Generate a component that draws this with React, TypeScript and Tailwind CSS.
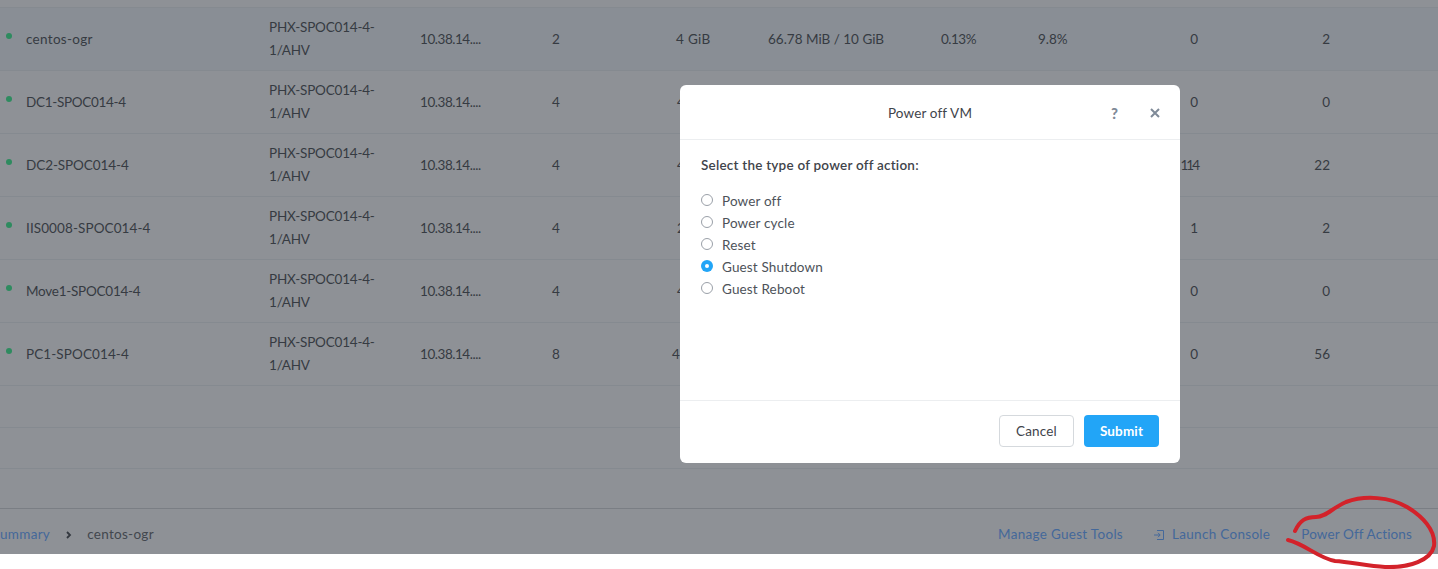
const rows = [
  { name: "centos-ogr", nameClass: "tracking-[0.3px]", cpu: "2", mem: "4 GiB", memClass: "pl-[64px] tracking-[0.3px]", usage: "66.78 MiB / 10 GiB", a: "0.13%", b: "9.8%", c: "0", cClass: "", d: "2", first: true },
  { name: "DC1-SPOC014-4", nameClass: "tracking-[-0.3px]", cpu: "4", mem: "4", memClass: "pl-[65px]", usage: "", a: "", b: "", c: "0", cClass: "", d: "0" },
  { name: "DC2-SPOC014-4", nameClass: "tracking-[-0.08px]", cpu: "4", mem: "4", memClass: "pl-[65px]", usage: "", a: "", b: "", c: "114", cClass: "tracking-[-2px]", d: "22" },
  { name: "IIS0008-SPOC014-4", nameClass: "tracking-[0.1px]", cpu: "4", mem: "2", memClass: "pl-[65px]", usage: "", a: "", b: "", c: "1", cClass: "", d: "2" },
  { name: "Move1-SPOC014-4", nameClass: "tracking-[-0.25px]", cpu: "4", mem: "4", memClass: "pl-[65px]", usage: "", a: "", b: "", c: "0", cClass: "", d: "0" },
  { name: "PC1-SPOC014-4", nameClass: "tracking-[0.1px]", cpu: "8", mem: "4", memClass: "pl-[60px]", usage: "", a: "", b: "", c: "0", cClass: "", d: "56" },
];

const options = ["Power off", "Power cycle", "Reset", "Guest Shutdown", "Guest Reboot"];

export default function App() {
  return (
    <div className="relative w-[1438px] h-[569px] overflow-hidden bg-white font-['Lato','Open_Sans',sans-serif]">
      <div className="flex flex-col h-[554px] bg-[#8e9196] text-[13.5px] text-[#363b42]">
        <div className="h-[8px] shrink-0 border-b border-[#858a90]" />
        {rows.map((r) => (
          <div
            key={r.name}
            className={`grid grid-cols-[26px_243px_151px_80px_112px_156px_173px_97px_82px_144px_116px] items-center h-[63px] shrink-0 border-b border-[#858a90] ${r.first ? "bg-[#898e95]" : ""}`}
          >
            <div className="pl-[6px] -mt-[6px]">
              <div className="w-[6px] h-[6px] rounded-full bg-[#2e8b5f]" />
            </div>
            <div className={r.nameClass}>{r.name}</div>
            <div className="leading-[23px] tracking-[-0.2px]">
              PHX-SPOC014-4-
              <br />
              1/AHV
            </div>
            <div className="tracking-[-0.45px]">10.38.14....</div>
            <div className="text-center">{r.cpu}</div>
            <div className={r.memClass}>{r.mem}</div>
            <div>{r.usage}</div>
            <div className="tracking-[-0.5px]">{r.a}</div>
            <div>{r.b}</div>
            <div className={`text-right pr-[66px] ${r.cClass}`}>{r.c}</div>
            <div className="text-right pr-[50px]">{r.d}</div>
          </div>
        ))}
        <div className="h-[42px] shrink-0 border-b border-[#858a90]" />
        <div className="h-[41px] shrink-0 border-b border-[#858a90]" />
        <div className="h-[40px] shrink-0 border-b border-[#7a7e84]" />
        <div className="flex-1 flex items-center justify-between pr-[26px] pt-[6px] text-[#44689a] tracking-[0.3px]">
          <div className="flex items-center">
            <span>ummary</span>
            <svg viewBox="0 0 8 8" className="w-[8px] h-[8px] ml-[15px] mr-[14px] text-[#33383f]" fill="none" stroke="currentColor" strokeWidth="1.8">
              <path d="M2 1l3 3-3 3" />
            </svg>
            <span className="text-[#42474e]">centos-ogr</span>
          </div>
          <div className="flex items-center">
            <span>Manage Guest Tools</span>
            <svg viewBox="0 0 12 12" className="w-[12px] h-[12px] ml-[30px] mr-[7px]" fill="none" stroke="currentColor" strokeWidth="1">
              <path d="M4 1.5h6.5v9H4M1 6h6M5 3.8 7.2 6 5 8.2" />
            </svg>
            <span>Launch Console</span>
            <span className="ml-[31px] tracking-[0.13px]">Power Off Actions</span>
          </div>
        </div>
      </div>

      <div className="absolute left-[680px] top-[85px] w-[500px] h-[378px] flex flex-col bg-white rounded-[6px] text-[13.5px] text-[#4d5259] tracking-[0.15px]">
        <div className="relative h-[55px] shrink-0 flex items-center justify-center pt-[2px] border-b border-[#eceef0] text-[#3f444b]">
          <span>Power off VM</span>
          <span className="absolute left-[431px] font-black text-[15px] text-[#7f8a98]">?</span>
          <svg viewBox="0 0 10 10" className="absolute left-[470px] w-[10px] h-[10px] text-[#7f8a98]" fill="none" stroke="currentColor" strokeWidth="2">
            <path d="M1 1l8 8M9 1l-8 8" />
          </svg>
        </div>
        <div className="flex-1 px-[21px] pt-[16px]">
          <div className="font-semibold text-[#3f444b] leading-[18px] mb-[16px] tracking-[0.22px]">Select the type of power off action:</div>
          <div className="flex flex-col">
            {options.map((o) => (
              <div key={o} className="flex items-center h-[22px]">
                {o === "Guest Shutdown" ? (
                  <div className="w-[12px] h-[12px] -mt-[2px] rounded-full bg-[#22a5f7] flex items-center justify-center">
                    <div className="w-[4px] h-[4px] rounded-full bg-white" />
                  </div>
                ) : (
                  <div className="w-[12px] h-[12px] -mt-[2px] rounded-full border border-[#9aa0a8] bg-white" />
                )}
                <span className="ml-[9px]">{o}</span>
              </div>
            ))}
          </div>
        </div>
        <div className="h-[63px] shrink-0 flex items-start justify-end gap-[10px] pt-[14px] pr-[21px] border-t border-[#eceef0]">
          <div className="w-[75px] h-[32px] flex items-center justify-center rounded-[4px] border border-[#d5d9dd] text-[#3f444b]">Cancel</div>
          <div className="w-[75px] h-[32px] flex items-center justify-center rounded-[4px] bg-[#22a5f7] text-white font-bold">Submit</div>
        </div>
      </div>

      <svg viewBox="0 0 1438 569" className="absolute inset-0 w-[1438px] h-[569px] pointer-events-none" fill="none" stroke="#d3222a" strokeWidth="4" strokeLinecap="round" strokeLinejoin="round">
        <path d="M1295 531C1300 520 1306 517 1316 517C1326 517 1332 508 1346 502C1365 495 1390 497 1407 507C1422 516 1436 530 1434 546C1431 560 1410 568 1385 567C1368 566 1350 562 1335 561C1318 558 1305 544 1288 540" />
      </svg>
    </div>
  );
}
